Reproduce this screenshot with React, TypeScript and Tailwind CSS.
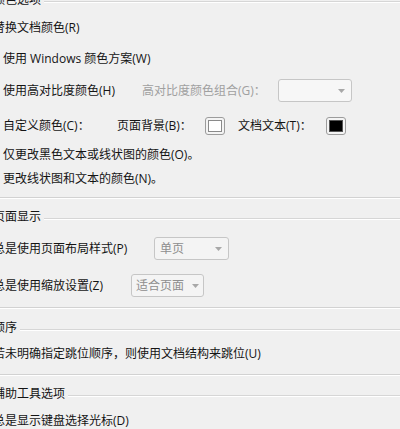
import type { ReactNode } from "react";

const GroupHeader = ({ title, className = "" }: { title: string; className?: string }) => (
  <div className={`flex h-[20px] items-center gap-[3px] ${className}`}>
    <span className="whitespace-nowrap">{title}</span>
    <div className="mt-[4px] h-[2px] flex-1 border-t border-b border-t-[#d6d6d6] border-b-white" />
  </div>
);

const Divider = ({ className = "" }: { className?: string }) => (
  <div className={`h-[2px] w-full border-t border-b border-t-[#d2d2d2] border-b-white ${className}`} />
);

const Row = ({ children, className = "" }: { children: ReactNode; className?: string }) => (
  <div className={`flex items-center whitespace-nowrap ${className}`}>{children}</div>
);

const Arrow = () => (
  <svg width="7" height="4" viewBox="0 0 7 4">
    <path d="M0 0h7L3.5 4z" fill="#a8a8a8" />
  </svg>
);

const Select = ({ value = "", className = "" }: { value?: string; className?: string }) => (
  <div
    className={`flex h-[23px] items-center justify-between rounded-[3px] border border-[#c6c6c6] bg-[#f4f4f4] text-[#8e8e8e] ${className}`}
  >
    <span>{value}</span>
    <Arrow />
  </div>
);

const Swatch = ({ color }: { color: "white" | "black" }) => (
  <div className="flex h-[18px] w-[20px] rounded-[3px] border border-[#9c9c9c] bg-[#f4f4f4] p-[2px]">
    <div
      className={
        color === "white"
          ? "flex-1 border border-[#8a8a8a] bg-white"
          : "flex-1 border border-[#555555] bg-black"
      }
    />
  </div>
);

export default function App() {
  return (
    <div className="h-[429px] w-[400px] overflow-hidden bg-[#f0f0f0] font-['Open_Sans','Noto_Sans_CJK_SC',sans-serif] text-[12px] leading-none text-[#141414]">
      <div className="-mt-[10px] -ml-[7px] flex w-[407px] flex-col">
        {/* 颜色选项 */}
        <GroupHeader title="颜色选项" />
        <Row className="mt-[8px] h-[20px]">替换文档颜色(R)</Row>
        <Row className="mt-[11px] h-[20px] pl-[10px]">使用 Windows 颜色方案(W)</Row>
        <Row className="mt-[10px] h-[23px] pl-[10px]">
          <span className="w-[139px]">使用高对比度颜色(H)</span>
          <span className="w-[136px] text-[#a0a0a0]">高对比度颜色组合(G)：</span>
          <Select className="w-[74px] bg-[#f7f7f7] pr-[6px] pl-[4px]" />
        </Row>
        <Row className="mt-[15px] h-[18px] pl-[10px]">
          <span className="w-[114px]">自定义颜色(C)：</span>
          <span className="w-[88px]">页面背景(B)：</span>
          <Swatch color="white" />
          <span className="ml-[13px] w-[88px]">文档文本(T)：</span>
          <Swatch color="black" />
        </Row>
        <Row className="mt-[10px] h-[20px] pl-[10px]">仅更改黑色文本或线状图的颜色(O)。</Row>
        <Row className="mt-[4px] h-[20px] pl-[10px]">更改线状图和文本的颜色(N)。</Row>
        <Divider className="mt-[8px]" />

        {/* 页面显示 */}
        <GroupHeader title="页面显示" className="mt-[8px]" />
        <Row className="mt-[10px] h-[23px]">
          <span className="w-[161px]">总是使用页面布局样式(P)</span>
          <Select value="单页" className="w-[75px] pr-[6px] pl-[5px]" />
        </Row>
        <Row className="mt-[14px] h-[23px]">
          <span className="w-[138px]">总是使用缩放设置(Z)</span>
          <Select value="适合页面" className="w-[73px] pr-[4px] pl-[4px]" />
        </Row>
        <Divider className="mt-[10px]" />

        {/* 顺序 */}
        <GroupHeader title="顺序" className="mt-[9px]" />
        <Row className="mt-[6px] h-[20px]">若未明确指定跳位顺序，则使用文档结构来跳位(U)</Row>
        <Divider className="mt-[10px]" />

        {/* 辅助工具选项 */}
        <GroupHeader title="辅助工具选项" className="mt-[8px]" />
        <Row className="mt-[7px] h-[20px]">总是显示键盘选择光标(D)</Row>
      </div>
    </div>
  );
}
